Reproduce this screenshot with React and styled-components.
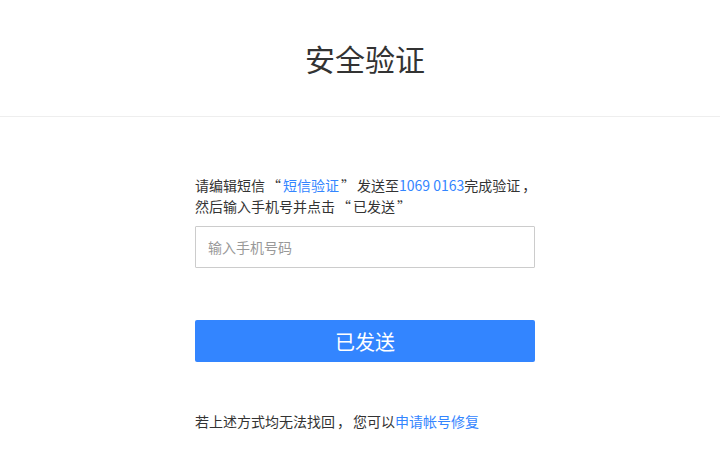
import styled, { createGlobalStyle } from 'styled-components';

const GlobalStyle = createGlobalStyle`
  html, body {
    margin: 0;
    padding: 0;
    background: #fff;
  }
  body {
    font-family: 'Microsoft YaHei', 'Noto Sans CJK SC', 'Noto Sans', sans-serif;
    color: #333;
  }
`;

const BLUE = '#3385ff';

export default function App() {
  return (
    <>
      <GlobalStyle />
      <Header>
        <Title>安全验证</Title>
      </Header>
      <Main>
        <Hint>
          请编辑短信<Quote>“</Quote><Link>短信验证</Link><Quote>”</Quote>发送至
          <Link>1069 0163</Link>完成验证<Quote>，</Quote>
          <br />
          然后输入手机号并点击<Quote>“</Quote>已发送<Quote>”</Quote>
        </Hint>
        <PhoneInput type="text" placeholder="输入手机号码" />
        <SubmitButton type="button">已发送</SubmitButton>
        <Footer>
          若上述方式均无法找回<Quote>，</Quote>您可以<Link>申请帐号修复</Link>
        </Footer>
      </Main>
    </>
  );
}

const Header = styled.header`
  height: 116px;
  border-bottom: 1px solid #eee;
  display: flex;
  align-items: center;
  justify-content: center;
  padding-left: 10px;
`;

const Title = styled.h1`
  margin: 0;
  font-size: 30px;
  font-weight: 400;
  line-height: 34px;
  color: #333;
`;

const Main = styled.main`
  width: 340px;
  margin: 0 auto;
  padding: 58px 0 0 10px;
  display: flex;
  flex-direction: column;
`;

const Hint = styled.p`
  margin: 0 0 9px;
  font-size: 14px;
  line-height: 21px;
  color: #333;
  white-space: nowrap;
`;

/* CJK punctuation is drawn wider in the reference font */
const Quote = styled.span`
  display: inline-block;
  padding: 0 2px;
`;

const Link = styled.span`
  color: ${BLUE};
  cursor: pointer;
`;

const PhoneInput = styled.input`
  box-sizing: border-box;
  width: 340px;
  height: 42px;
  border: 1px solid #ccc;
  border-radius: 1px;
  padding: 0 12px;
  font-family: inherit;
  font-size: 14px;
  color: #333;
  outline: none;
  &::placeholder {
    color: #999;
  }
`;

const SubmitButton = styled.button`
  margin-top: 52px;
  width: 340px;
  height: 42px;
  border: none;
  border-radius: 2px;
  background: ${BLUE};
  color: #fff;
  font-family: inherit;
  font-size: 20px;
  cursor: pointer;
`;

const Footer = styled.p`
  margin: 49px 0 0;
  font-size: 14px;
  line-height: 21px;
  color: #333;
`;
